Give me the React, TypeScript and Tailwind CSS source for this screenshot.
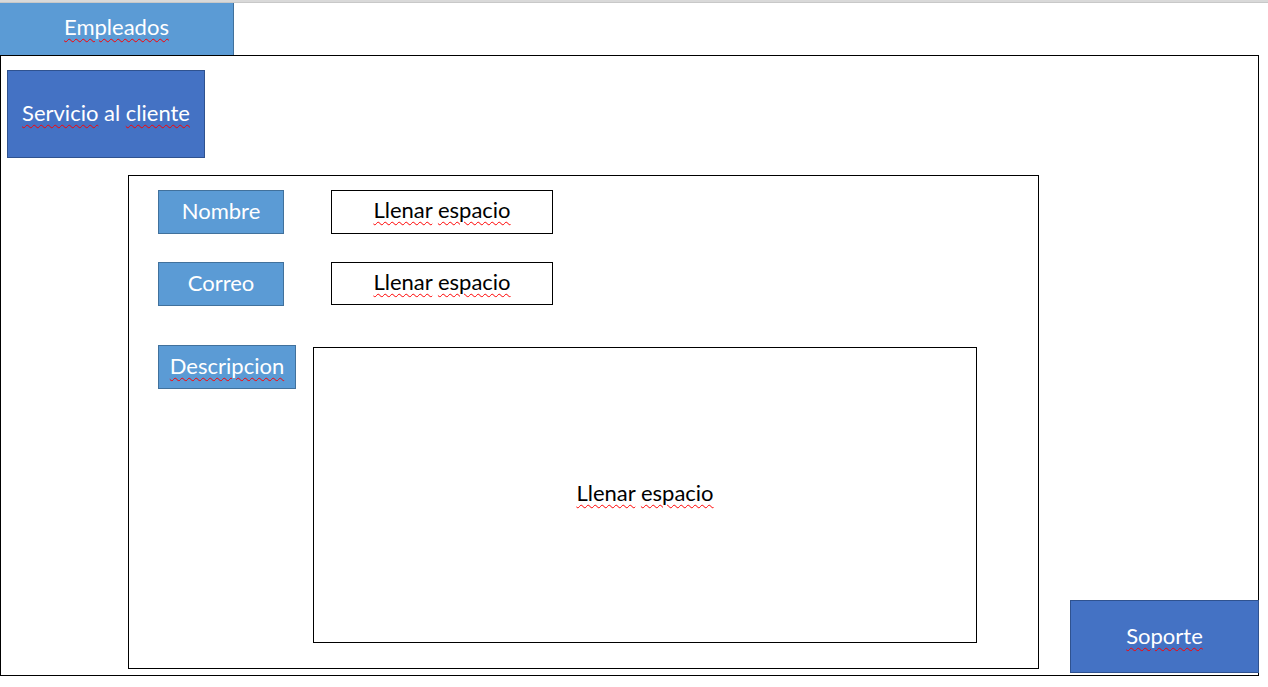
import React from "react";

const wavy = "underline decoration-wavy decoration-[#ff0000] decoration-1 underline-offset-[3px]";

const Campo = ({ label, w, spell }: { label: string; w: string; spell?: boolean }) => (
  <div
    className={`${w} h-[44px] flex items-center justify-center bg-[#5b9bd5] border border-[#41719c] text-white text-[22px] leading-none pb-[3px]`}
  >
    <span className={spell ? wavy : ""}>{label}</span>
  </div>
);

const Llenar = () => (
  <span>
    <span className={wavy}>Llenar</span> <span className={wavy}>espacio</span>
  </span>
);

export default function App() {
  return (
    <div className="w-[1268px] h-[687px] bg-white overflow-hidden font-['Lato','Noto_Sans',sans-serif]">
      <div className="h-[3px] bg-[#d9d9d9] border-b border-[#c8c8c8]" />
      <div className="w-[234px] h-[52px] flex items-center justify-center bg-[#5b9bd5] border-r border-[#41719c] text-white text-[22px] leading-none pb-[4px]">
        <span className={wavy}>Empleados</span>
      </div>
      <div className="w-[1259px] h-[621px] border border-black flex flex-col">
        <div className="ml-[6px] mt-[14px] w-[198px] h-[88px] flex items-center justify-center bg-[#4472c4] border border-[#2f528f] text-white text-[22px] leading-none pb-[2px]">
          <span>
            <span className={wavy}>Servicio</span> al <span className={wavy}>cliente</span>
          </span>
        </div>
        <div className="flex items-end mt-[17px]">
          <div className="ml-[127px] w-[911px] h-[494px] border border-black flex flex-col pl-[29px] pt-[14px]">
            <div className="flex items-start gap-[47px]">
              <Campo label="Nombre" w="w-[126px]" />
              <div className="w-[222px] h-[44px] border border-black flex items-center justify-center text-[22px] leading-none pb-[4px] text-black">
                <Llenar />
              </div>
            </div>
            <div className="flex items-start gap-[47px] mt-[28px]">
              <Campo label="Correo" w="w-[126px]" />
              <div className="w-[222px] h-[43px] border border-black flex items-center justify-center text-[22px] leading-none pb-[4px] text-black">
                <Llenar />
              </div>
            </div>
            <div className="flex items-start gap-[17px] mt-[39px]">
              <Campo label="Descripcion" w="w-[138px]" spell />
              <div className="mt-[2px] w-[664px] h-[296px] border border-black flex items-center justify-center text-[22px] leading-none pb-[4px] text-black">
                <Llenar />
              </div>
            </div>
          </div>
          <div className="ml-auto mb-[-4px] mr-[-1px] w-[189px] h-[73px] flex items-center justify-center bg-[#4472c4] border border-[#2f528f] text-white text-[22px] leading-none pb-[2px]">
            <span className={wavy}>Soporte</span>
          </div>
        </div>
      </div>
    </div>
  );
}
